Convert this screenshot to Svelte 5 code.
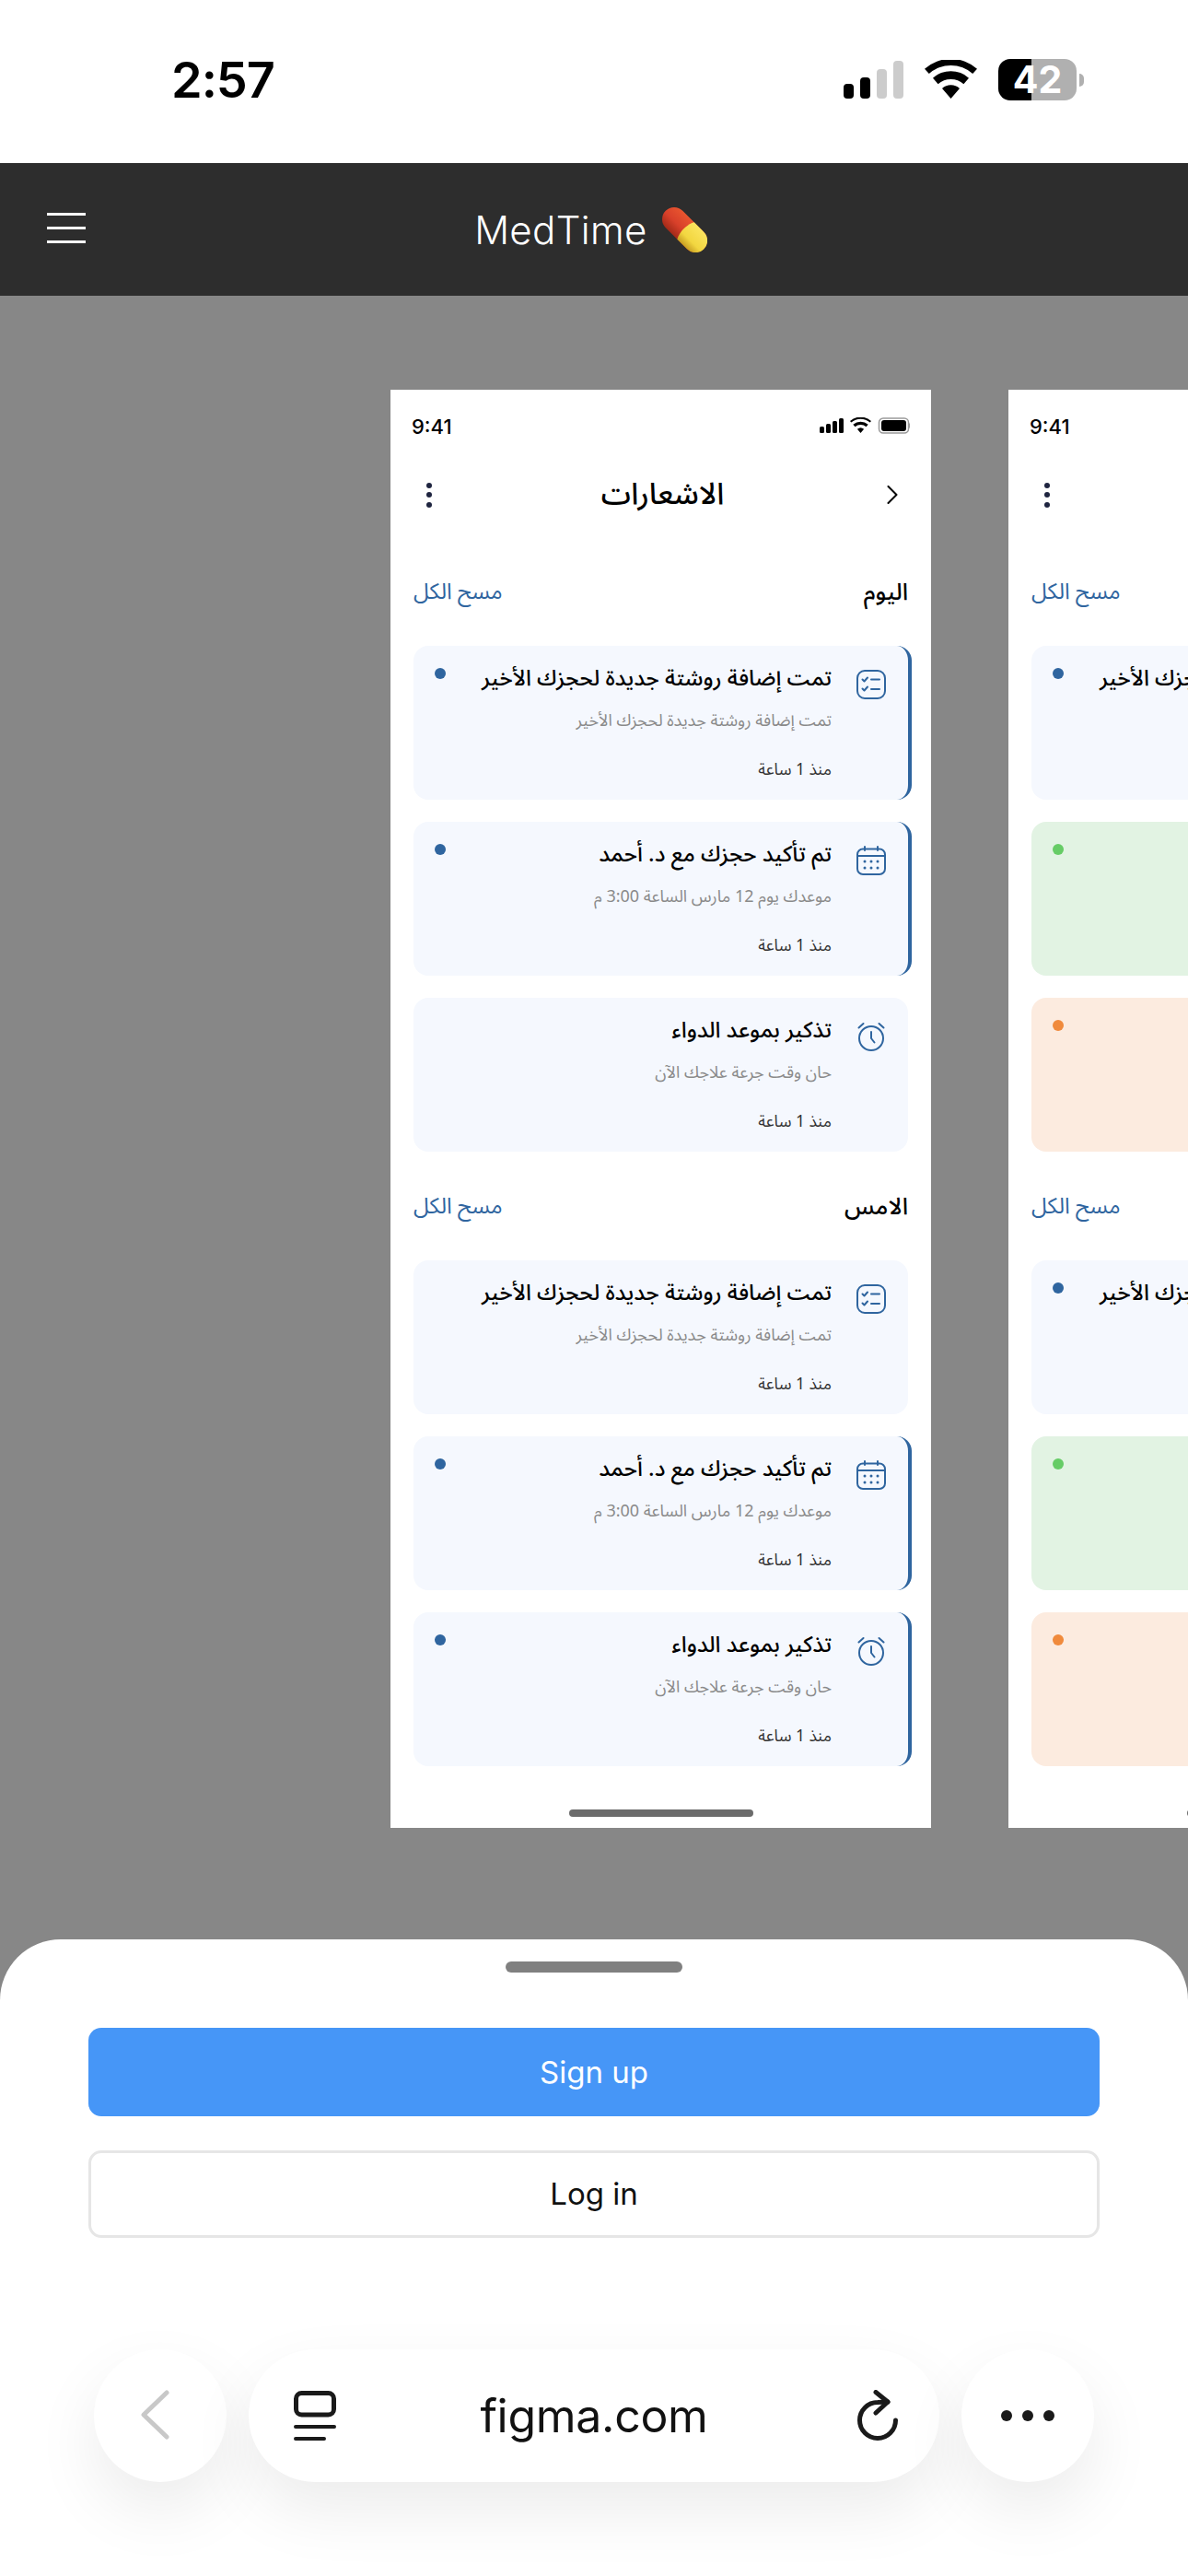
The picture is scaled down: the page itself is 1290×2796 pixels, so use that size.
<script>
  const groups = [
    { label: 'اليوم', items: ['checklist', 'calendar', 'alarm'] },
    { label: 'الامس', items: ['checklist', 'calendar', 'alarm'] }
  ];
  const copy = {
    checklist: { title: 'تمت إضافة روشتة جديدة لحجزك الأخير', body: 'تمت إضافة روشتة جديدة لحجزك الأخير' },
    calendar: { title: 'تم تأكيد حجزك مع د. أحمد', body: 'موعدك يوم 12 مارس الساعة 3:00 م' },
    alarm: { title: 'تذكير بموعد الدواء', body: 'حان وقت جرعة علاجك الآن' }
  };
  const frames = [
    { name: 'one', tones: [['unread', 'unread', 'read'], ['read', 'unread', 'unread']] },
    { name: 'two', tones: [['blue', 'green', 'orange'], ['blue', 'green', 'orange']] }
  ];
</script>

{#snippet icon(kind)}
  <svg class="card-icon" viewBox="0 0 32 32" fill="none" stroke="#2f659f" stroke-width="2" stroke-linecap="round" stroke-linejoin="round">
    {#if kind === 'checklist'}
      <rect x="1" y="1" width="30" height="30" rx="8" />
      <path d="M6.500 10.500l2 2 3.500-4M6.500 20.500l2 2 3.500-4M16 10.500h9M16 21h9" />
    {:else if kind === 'calendar'}
      <rect x="1" y="3.500" width="30" height="27.500" rx="6" />
      <path d="M1 11h30M9 1v4M23 1v4" />
      <g fill="#2f659f" stroke="none">
        <circle cx="9" cy="17" r="1.500" /><circle cx="16" cy="17" r="1.500" /><circle cx="23" cy="17" r="1.500" />
        <circle cx="9" cy="24" r="1.500" /><circle cx="16" cy="24" r="1.500" /><circle cx="23" cy="24" r="1.500" />
      </g>
    {:else}
      <circle cx="16" cy="18" r="13" />
      <path d="M16 11v7l3.500 4.500M2.500 6.500L7.500 2M29.500 6.500L24.500 2" />
    {/if}
  </svg>
{/snippet}

{#snippet frame(f)}
  <section class="frame" dir="ltr">
    <div class="mini-status">
      <span class="mini-time">9:41</span>
      <svg class="mini-icons" width="98" height="18" viewBox="0 0 98 18">
        <g fill="#000">
          <rect x="0" y="10" width="5" height="7" rx="1.500" /><rect x="7" y="7" width="5" height="10" rx="1.500" />
          <rect x="14" y="4" width="5" height="13" rx="1.500" /><rect x="21" y="1" width="5" height="16" rx="1.500" />
          <path d="M44.500 17l-3.600-4.200a5.500 5.500 0 017.200 0zM38.500 10.300l-2.200-2.500a12.500 12.500 0 0116.400 0l-2.200 2.500a9 9 0 00-12 0zM34.300 5.600L33 3.900a17.500 17.500 0 0123 0l-1.300 1.700a15.600 15.600 0 00-20.400 0z" />
          <rect x="67" y="3" width="27" height="12" rx="3" />
        </g>
        <rect x="64.500" y="1" width="32" height="16" rx="4.500" fill="none" stroke="#9a9a9a" stroke-width="1.500" />
        <rect x="97" y="6.500" width="1" height="5" fill="#9a9a9a" />
      </svg>
    </div>
    <header class="mini-head">
      <span class="kebab"><i></i><i></i><i></i></span>
      <h2>الاشعارات</h2>
      <svg class="mini-chevron" width="12" height="20" viewBox="0 0 12 20" fill="none" stroke="#000" stroke-width="2" stroke-linecap="round" stroke-linejoin="round"><path d="M1.500 1l9 9-9 9" /></svg>
    </header>
    <div class="groups">
      {#each groups as group, g}
        <div class="group">
          <div class="group-head">
            <button class="clear">مسح الكل</button>
            <h3>{group.label}</h3>
          </div>
          <div class="cards">
            {#each group.items as kind, i}
              <article class="card {f.tones[g][i]}" dir="rtl">
                {@render icon(kind)}
                <div class="copy">
                  <h4>{copy[kind].title}</h4>
                  <p class="body">{copy[kind].body}</p>
                  <p class="ago">منذ 1 ساعة</p>
                </div>
                <span class="dot"></span>
              </article>
            {/each}
          </div>
        </div>
      {/each}
    </div>
    <div class="home-bar"></div>
  </section>
{/snippet}

<div class="page">
  <div class="status">
    <span class="clock">2:57</span>
    <div class="status-icons">
      <div class="bars"><i class="on b1"></i><i class="on b2"></i><i class="b3"></i><i class="b4"></i></div>
      <svg width="57" height="42" viewBox="0 0 57 42" fill="#000">
        <path d="M28.500 42l-9.500-11a14 14 0 0119 0zM14.600 26.200L9 19.700a29 29 0 0139 0l-5.600 6.500a21 21 0 00-27.800 0zM4.800 15L0 9.700a43 43 0 0157 0L52.200 15a35.500 35.500 0 00-47.400 0z" />
      </svg>
      <div class="battery">
        <span class="cell"><span class="level">42</span></span>
        <i class="cap"></i>
      </div>
    </div>
  </div>

  <nav class="nav">
    <div class="burger"><i></i><i></i><i></i></div>
    <div class="brand">
      <span>MedTime</span>
      <svg width="49" height="49" viewBox="0 0 49 49">
        <defs>
          <linearGradient id="red" x1="0" y1="0" x2="0" y2="1"><stop offset="0" stop-color="#e8552f" /><stop offset=".55" stop-color="#d8402a" /><stop offset="1" stop-color="#a32a18" /></linearGradient>
          <linearGradient id="yel" x1="0" y1="0" x2="0" y2="1"><stop offset="0" stop-color="#fbe45e" /><stop offset=".65" stop-color="#f2d640" /><stop offset="1" stop-color="#c79e22" /></linearGradient>
        </defs>
        <g transform="rotate(45 24.500 24.500)">
          <rect x="-4.750" y="11.500" width="58.500" height="26" rx="13" fill="url(#red)" />
          <path d="M26 11.500h15a13 13 0 010 26H26c-4-7-4-19 0-26z" fill="url(#yel)" />
        </g>
      </svg>
    </div>
  </nav>

  <main class="canvas">
    {#each frames as f}
      {@render frame(f)}
    {/each}
  </main>

  <section class="sheet">
    <div class="handle"></div>
    <button class="btn primary">Sign up</button>
    <button class="btn outline">Log in</button>
    <div class="browser">
      <div class="round">
        <svg class="back" width="32" height="56" viewBox="0 0 32 56" fill="none" stroke="#c8c8c8" stroke-width="5" stroke-linecap="round" stroke-linejoin="round"><path d="M29 4L4 28l25 24" /></svg>
      </div>
      <div class="url">
        <svg width="46" height="54" viewBox="0 0 46 54" fill="none" stroke="#1a1a1a" stroke-linecap="round">
          <rect x="2.500" y="2.500" width="41" height="23.500" rx="6" stroke-width="5" />
          <path d="M2 39h42M2 52h31" stroke-width="4" />
        </svg>
        <span class="address">figma.com</span>
        <svg width="46" height="56" viewBox="0 0 46 56" fill="none" stroke="#1a1a1a" stroke-width="5" stroke-linecap="round" stroke-linejoin="round">
          <path d="M41.500 33A19.500 19.500 0 1 1 22 13.500L33 13" /><path d="M20 2.500L33 13 20 25" />
        </svg>
      </div>
      <div class="round">
        <span class="more"><i></i><i></i><i></i></span>
      </div>
    </div>
  </section>
</div>

<style>
  :global(body) { margin: 0; background: #878787; }
  i { display: block; }
  .page {
    width: 1290px; height: 2796px; overflow: hidden;
    display: flex; flex-direction: column; background: #878787;
    font-family: Inter, "Liberation Sans", sans-serif;
  }
  .status {
    height: 177px; flex: none; background: #fff; box-sizing: border-box;
    display: flex; justify-content: space-between; padding: 56px 113px 0 186px;
  }
  .clock { font-size: 54px; line-height: 62px; font-weight: 600; color: #000; letter-spacing: -1px; }
  .status-icons { display: flex; align-items: flex-end; height: 45px; margin-top: 8px; }
  .bars { display: flex; align-items: flex-end; gap: 7px; height: 41px; margin-right: 23px; margin-bottom: 2px; }
  .bars i { width: 11px; border-radius: 4px; background: #ccc; }
  .bars .on { background: #000; }
  .b1 { height: 16px; } .b2 { height: 23px; } .b3 { height: 32px; } .b4 { height: 41px; }
  .status-icons svg { margin-right: 23px; margin-bottom: 2px; }
  .battery { display: flex; align-items: center; height: 45px; gap: 3px; }
  .cell {
    width: 85px; height: 45px; border-radius: 13px; display: flex; align-items: center; justify-content: center;
    background: linear-gradient(90deg, #000 0 36px, #b0b0b0 36px);
  }
  .level { color: #fff; font: 700 41px/45px Inter, "Liberation Sans", sans-serif; }
  .cap { width: 5px; height: 14px; border-radius: 0 5px 5px 0; background: #b0b0b0; }

  .nav {
    height: 144px; flex: none; background: #2d2d2d; position: relative;
    display: flex; align-items: center; justify-content: center;
  }
  .burger { position: absolute; left: 51px; top: 54px; display: flex; flex-direction: column; gap: 12px; }
  .burger i { width: 42px; height: 3px; background: #fff; }
  .brand { display: flex; align-items: center; gap: 16px; color: #fff; font-size: 42px; font-weight: 300; letter-spacing: .4px; margin-left: -7px; }

  .canvas { height: 1784px; flex: none; display: flex; gap: 84px; padding: 102px 0 0 424px; box-sizing: border-box; overflow: hidden; }
  .frame {
    width: 587px; height: 1561px; flex: none; background: #fff; box-sizing: border-box; padding: 0 25px;
    display: flex; flex-direction: column;
    font-family: "Noto Sans Arabic", Cairo, "DejaVu Sans", sans-serif;
  }
  .mini-status { height: 80px; display: flex; align-items: center; justify-content: space-between; margin: 0 -2px; }
  .mini-time { font: 500 22px/26px Inter, sans-serif; color: #000; }
  .mini-icons { margin-top: -2px; }
  .mini-head { height: 68px; display: flex; align-items: center; justify-content: space-between; padding: 0 11px 0 14px; }
  .kebab { display: flex; flex-direction: column; gap: 4.500px; }
  .kebab i { width: 6px; height: 6px; border-radius: 50%; background: #1f2540; }
  .mini-head h2 { margin: 0 0 0 7px; font-size: 32.500px; line-height: 40px; font-weight: 500; color: #000; }
  .groups { margin-top: 52px; display: flex; flex-direction: column; gap: 40px; }
  .group-head { height: 40px; display: flex; align-items: center; justify-content: space-between; margin-bottom: 38px; }
  .clear { border: 0; background: none; padding: 0; font: inherit; font-size: 24px; line-height: 40px; color: #2f659f; }
  .group-head h3 { margin: 0; font-size: 25.500px; line-height: 40px; font-weight: 500; color: #000; }
  .cards { display: flex; flex-direction: column; gap: 24px; }
  .card {
    height: 167px; box-sizing: border-box; display: flex; align-items: flex-start; gap: 27px;
    padding: 26px 24px 0 23px; border-radius: 16px; background: #f5f8fe;
  }
  .card-icon { width: 32px; height: 32px; flex: none; }
  .copy { flex: 1; margin-top: -8px; min-width: 0; white-space: nowrap; }
  .copy h4 { margin: 0; font-size: 24px; line-height: 36px; font-weight: 500; color: #000; }
  .body { margin: 12px 0 0; font-size: 18px; line-height: 30px; font-weight: 400; color: #8a8a8a; }
  .ago { margin: 25px 0 0; font-size: 17.500px; line-height: 28px; color: #333; }
  .dot { width: 12px; height: 12px; border-radius: 50%; flex: none; background: #2f659f; margin-top: -2px; }
  .unread { border-right: 4px solid #2f659f; margin-right: -4px; }
  .read .dot { visibility: hidden; }
  .green { background: #e2f3e3; } .green .dot { background: #66cc66; }
  .orange { background: #fcebdf; } .orange .dot { background: #f08a3c; }
  .home-bar { width: 200px; height: 8px; border-radius: 4px; background: #6b6b6b; margin: auto auto 12px; }

  .sheet {
    flex: 1; background: #fff; border-radius: 66px 66px 0 0; box-sizing: border-box;
    padding: 24px 96px 0; display: flex; flex-direction: column; align-items: center;
  }
  .handle { width: 192px; height: 12px; border-radius: 6px; background: #808080; }
  .btn { width: 100%; height: 96px; border-radius: 14px; font: 400 33px/1 Inter, sans-serif; box-sizing: border-box; }
  .primary { margin-top: 60px; background: #4696f7; color: #fff; border: 0; }
  .outline { margin-top: 37px; height: 95px; background: #fff; color: #111; border: 3.500px solid #e6e6e6; }
  .browser { margin-top: 121px; display: flex; gap: 24px; align-self: center; }
  .round, .url { height: 144px; background: #fff; border-radius: 72px; box-shadow: 0 30px 70px rgba(0,0,0,.08); display: flex; align-items: center; }
  .round { width: 144px; justify-content: center; }
  .back { margin: -3px 12px 0 0; }
  .url { width: 750px; justify-content: space-between; padding: 0 43px 0 49px; box-sizing: border-box; color: #111; font-size: 50px; letter-spacing: -.3px; }
  .address { margin-right: 6px; }
  .more { display: flex; gap: 11px; }
  .more i { width: 12px; height: 12px; border-radius: 50%; background: #1a1a1a; }
</style>
